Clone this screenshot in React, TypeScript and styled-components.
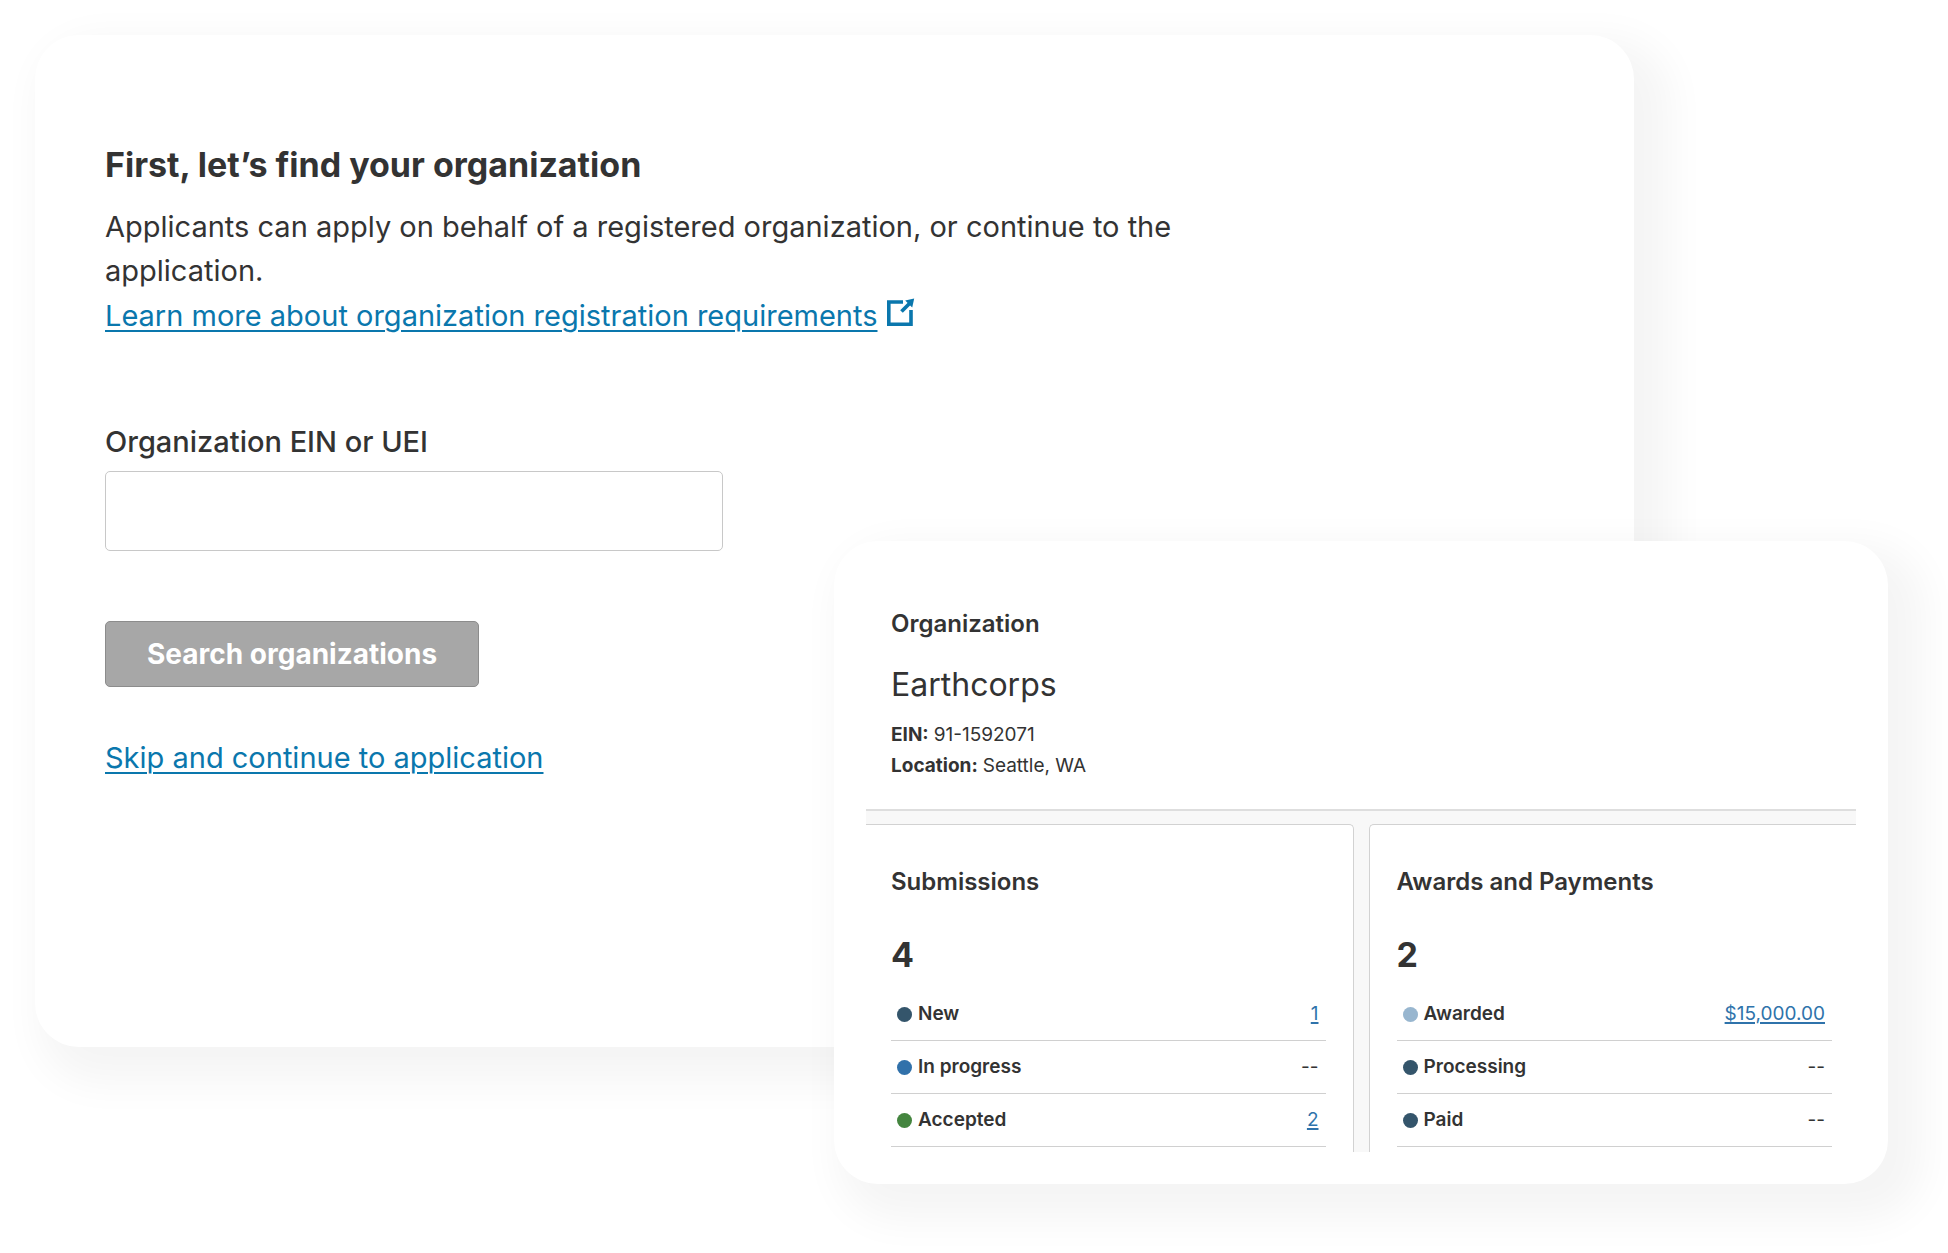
import React from "react";
import styled, { createGlobalStyle } from "styled-components";

const GlobalStyle = createGlobalStyle`
  *, *::before, *::after { box-sizing: border-box; }
  body {
    margin: 0;
    background: #fff;
    color: #333;
    font-family: Inter, "Open Sans", "Liberation Sans", sans-serif;
  }
  h1, h2, h3, p, dl, dd { margin: 0; }
`;

const Stage = styled.main`
  display: grid;
  grid-template-columns: 799fr 800fr 254fr;
  align-items: start;
  padding: 35px 60px 70px 35px;
`;

const Card = styled.section`
  background: #fff;
  border-radius: 44px;
  box-shadow: 20px 20px 40px 16px rgba(0, 0, 0, 0.045);
`;

const FinderCard = styled(Card)`
  grid-row: 1;
  grid-column: 1 / 3;
  padding: 108px 70px 267px;
`;

const SummaryCard = styled(Card)`
  grid-row: 1;
  grid-column: 2 / 4;
  margin-top: 506px;
  padding: 67px 32px 32px;
`;

const Heading = styled.h1`
  font-size: 34px;
  line-height: 44px;
  font-weight: 700;
`;

const Intro = styled.p`
  max-width: 1120px;
  margin-top: 18px;
  font-size: 29px;
  line-height: 44px;
`;

const IntroLine = styled.span`
  display: block;
  margin-top: 1px;
`;

const TextLink = styled.a`
  color: #0a77ad;
  font-size: 29px;
  line-height: 44px;
  text-decoration-thickness: 2px;
  text-underline-offset: 4px;
`;

const LinkIcon = styled.svg`
  width: 28px;
  height: 28px;
  margin-left: 9px;
  color: #0a77ad;
`;

const Form = styled.form`
  display: flex;
  flex-direction: column;
  align-items: flex-start;
  margin-top: 86px;
`;

const Label = styled.label`
  font-size: 29px;
  line-height: 36px;
  font-weight: 500;
`;

const TextInput = styled.input`
  width: 100%;
  max-width: 618px;
  height: 80px;
  margin-top: 11px;
  padding: 0 20px;
  border: 1px solid #c8c8c8;
  border-radius: 5px;
  background: #fff;
  color: inherit;
  font: inherit;
  font-size: 29px;
`;

const SearchButton = styled.button`
  height: 66px;
  margin: 70px 0 49px;
  padding: 0 41px;
  border: 1px solid #8c8c8c;
  border-radius: 5px;
  background: #a7a7a7;
  color: #fff;
  font: inherit;
  font-size: 28px;
  font-weight: 700;
`;

const SummaryHeader = styled.header`
  padding: 0 25px 28px;
`;

const SectionTitle = styled.h2`
  font-size: 24px;
  line-height: 32px;
  font-weight: 600;
`;

const OrgName = styled.p`
  margin: 23px 0 12px;
  font-size: 32px;
  line-height: 44px;
`;

const Facts = styled.dl`
  font-size: 19px;
  line-height: 31px;
`;

const Fact = styled.div`
  display: flex;
  gap: 5px;

  dt { font-weight: 700; }
`;

const Panels = styled.div`
  display: grid;
  grid-template-columns: 1fr 1fr;
  gap: 15px;
  padding-top: 13px;
  border-top: 2px solid #dedede;
  background: #f8f8f8;
`;

const Panel = styled.section<{ $side: "left" | "right" }>`
  padding: 41px ${p => (p.$side === "left" ? "27px 5px 25px" : "24px 5px 27px")};
  border: 0 solid #d2d2d2;
  border-top-width: 1px;
  ${p =>
    p.$side === "left"
      ? "border-right-width: 1px; border-top-right-radius: 5px;"
      : "border-left-width: 1px; border-top-left-radius: 5px;"}
  background: #fff;
`;

const Total = styled.p`
  margin: 35px 0 11px;
  font-size: 34px;
  line-height: 44px;
  font-weight: 700;
`;

const StatusTable = styled.table`
  width: 100%;
  border-spacing: 0;
  font-size: 19px;
  line-height: 24px;
`;

const StatusName = styled.th`
  height: 53px;
  padding: 0 0 0 6px;
  border-bottom: 1px solid #d0d0d0;
  text-align: left;
  font-weight: 600;
`;

const NameContent = styled.span`
  display: flex;
  align-items: center;
  gap: 6px;
`;

const Dot = styled.span<{ $color: string }>`
  width: 15px;
  height: 15px;
  border-radius: 50%;
  background: ${p => p.$color};
`;

const StatusValue = styled.td`
  padding: 0 7px 0 0;
  border-bottom: 1px solid #d0d0d0;
  text-align: right;
`;

const ValueLink = styled.a`
  color: #2f73ab;
  text-decoration-thickness: 2px;
  text-underline-offset: 2px;
`;

type Status = { name: string; color: string; value?: string };

const submissions: Status[] = [
  { name: "New", color: "#34556b", value: "1" },
  { name: "In progress", color: "#3171aa" },
  { name: "Accepted", color: "#44853f", value: "2" },
];

const awards: Status[] = [
  { name: "Awarded", color: "#98b6cf", value: "$15,000.00" },
  { name: "Processing", color: "#34556b" },
  { name: "Paid", color: "#34556b" },
];

function ExternalIcon() {
  return (
    <LinkIcon viewBox="0 0 28 28" aria-hidden="true">
      <path d="M16 4H1.8V26.2H24V12" fill="none" stroke="currentColor" strokeWidth="3.6" />
      <path d="M14.5 13.5L23 5" fill="none" stroke="currentColor" strokeWidth="3.8" />
      <path d="M27.2 0.4L18.2 2.4L25.2 9.4Z" fill="currentColor" />
    </LinkIcon>
  );
}

function StatusPanel(props: { side: "left" | "right"; title: string; total: number; rows: Status[] }) {
  return (
    <Panel $side={props.side}>
      <SectionTitle as="h3">{props.title}</SectionTitle>
      <Total>{props.total}</Total>
      <StatusTable aria-label={props.title}>
        <tbody>
          {props.rows.map(row => (
            <tr key={row.name}>
              <StatusName scope="row">
                <NameContent>
                  <Dot $color={row.color} />
                  {row.name}
                </NameContent>
              </StatusName>
              <StatusValue>
                {row.value ? <ValueLink href="#">{row.value}</ValueLink> : "--"}
              </StatusValue>
            </tr>
          ))}
        </tbody>
      </StatusTable>
    </Panel>
  );
}

export default function App() {
  return (
    <>
      <GlobalStyle />
      <Stage>
        <FinderCard>
          <Heading>First, let’s find your organization</Heading>
          <Intro>
            Applicants can apply on behalf of a registered organization, or continue to the application.
            <IntroLine>
              <TextLink href="#">Learn more about organization registration requirements</TextLink>
              <ExternalIcon />
            </IntroLine>
          </Intro>
          <Form onSubmit={e => e.preventDefault()}>
            <Label htmlFor="org-id">Organization EIN or UEI</Label>
            <TextInput id="org-id" type="text" />
            <SearchButton type="submit">Search organizations</SearchButton>
            <TextLink href="#">Skip and continue to application</TextLink>
          </Form>
        </FinderCard>
        <SummaryCard>
          <SummaryHeader>
            <SectionTitle>Organization</SectionTitle>
            <OrgName>Earthcorps</OrgName>
            <Facts>
              <Fact>
                <dt>EIN:</dt>
                <dd>91-1592071</dd>
              </Fact>
              <Fact>
                <dt>Location:</dt>
                <dd>Seattle, WA</dd>
              </Fact>
            </Facts>
          </SummaryHeader>
          <Panels>
            <StatusPanel side="left" title="Submissions" total={4} rows={submissions} />
            <StatusPanel side="right" title="Awards and Payments" total={2} rows={awards} />
          </Panels>
        </SummaryCard>
      </Stage>
    </>
  );
}
